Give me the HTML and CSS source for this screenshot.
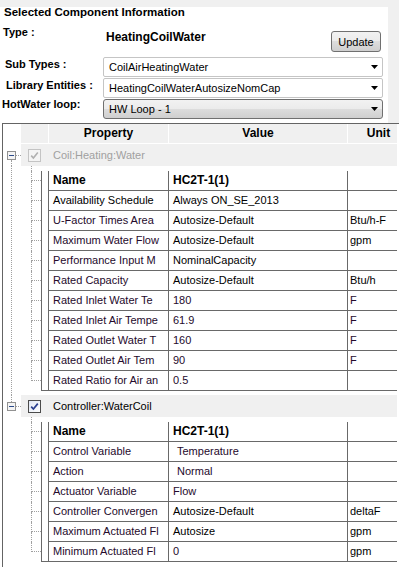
FILE: index.html
```html
<!DOCTYPE html>
<html lang="en">
<head>
    <meta charset="UTF-8">
    <title>Selected Component Information</title>
    <link rel="stylesheet" href="styles.css">
</head>
<body>
    <!-- Component form -->
    <div class="panel">
        <div class="title">Selected Component Information</div>

        <div class="type-row">
            <span class="label">Type :</span>
            <span class="type-value">HeatingCoilWater</span>
            <button class="btn">Update</button>
        </div>

        <div class="field">
            <span class="label lbl-sub">Sub Types :</span>
            <div class="combo">CoilAirHeatingWater<svg class="arrow" width="7" height="4"><path d="M0 0h7L3.5 4z" fill="#000"/></svg></div>
        </div>
        <div class="field">
            <span class="label lbl-lib">Library Entities :</span>
            <div class="combo">HeatingCoilWaterAutosizeNomCap<svg class="arrow" width="7" height="4"><path d="M0 0h7L3.5 4z" fill="#000"/></svg></div>
        </div>
        <div class="field">
            <span class="label lbl-loop">HotWater loop:</span>
            <div class="combo dark">HW Loop - 1<svg class="arrow" width="7" height="4"><path d="M0 0h7L3.5 4z" fill="#000"/></svg></div>
        </div>
    </div>

    <!-- Property grid -->
    <div class="grid">
        <div class="tree">
            <div class="header">
                <div class="c0"></div>
                <div class="c-prop">Property</div>
                <div class="c-val">Value</div>
                <div class="c-unit">Unit</div>
            </div>

            <!-- Coil:Heating:Water -->
            <div class="group">
                <div class="expander">
                    <div class="exp-col">
                        <div class="stem"></div>
                        <svg class="minus" width="9" height="9"><rect x="0.5" y="0.5" width="8" height="8" fill="#f4f4f4" stroke="#919191"/><path d="M2 4.5h5" stroke="#2b4a8a"/></svg>
                        <div class="stem on"></div>
                    </div>
                    <div class="branch"></div>
                </div>
                <div class="group-bar">
                    <svg class="check" width="13" height="13"><rect x="0.5" y="0.5" width="12" height="12" fill="#f4f4f4" stroke="#c4c4c4"/><path d="M3.2 6.6l2.2 2.4 4.4-5.4" fill="none" stroke="#b0b0b0" stroke-width="1.6"/></svg>
                    <span class="group-name off">Coil:Heating:Water</span>
                </div>
            </div>
            <div class="children">
                <div class="lead"></div>
                <div class="row bold"><div class="twig"><div class="twig-top"></div><div class="twig-bot"></div></div><div class="rh"></div><div class="cells"><div class="cell c-prop">Name</div><div class="cell c-val">HC2T-1(1)</div><div class="cell c-unit"></div></div></div>
                <div class="row"><div class="twig"><div class="twig-top"></div><div class="twig-bot"></div></div><div class="rh"></div><div class="cells"><div class="cell c-prop">Availability Schedule</div><div class="cell c-val">Always ON_SE_2013</div><div class="cell c-unit"></div></div></div>
                <div class="row"><div class="twig"><div class="twig-top"></div><div class="twig-bot"></div></div><div class="rh"></div><div class="cells"><div class="cell c-prop mod">U-Factor Times Area</div><div class="cell c-val">Autosize-Default</div><div class="cell c-unit">Btu/h-F</div></div></div>
                <div class="row"><div class="twig"><div class="twig-top"></div><div class="twig-bot"></div></div><div class="rh"></div><div class="cells"><div class="cell c-prop mod">Maximum Water Flow</div><div class="cell c-val">Autosize-Default</div><div class="cell c-unit">gpm</div></div></div>
                <div class="row"><div class="twig"><div class="twig-top"></div><div class="twig-bot"></div></div><div class="rh"></div><div class="cells"><div class="cell c-prop mod">Performance Input M</div><div class="cell c-val">NominalCapacity</div><div class="cell c-unit"></div></div></div>
                <div class="row"><div class="twig"><div class="twig-top"></div><div class="twig-bot"></div></div><div class="rh"></div><div class="cells"><div class="cell c-prop mod">Rated Capacity</div><div class="cell c-val">Autosize-Default</div><div class="cell c-unit">Btu/h</div></div></div>
                <div class="row"><div class="twig"><div class="twig-top"></div><div class="twig-bot"></div></div><div class="rh"></div><div class="cells"><div class="cell c-prop mod">Rated Inlet Water Te</div><div class="cell c-val mod">180</div><div class="cell c-unit mod">F</div></div></div>
                <div class="row"><div class="twig"><div class="twig-top"></div><div class="twig-bot"></div></div><div class="rh"></div><div class="cells"><div class="cell c-prop mod">Rated Inlet Air Tempe</div><div class="cell c-val mod">61.9</div><div class="cell c-unit mod">F</div></div></div>
                <div class="row"><div class="twig"><div class="twig-top"></div><div class="twig-bot"></div></div><div class="rh"></div><div class="cells"><div class="cell c-prop mod">Rated Outlet Water T</div><div class="cell c-val mod">160</div><div class="cell c-unit mod">F</div></div></div>
                <div class="row"><div class="twig"><div class="twig-top"></div><div class="twig-bot"></div></div><div class="rh"></div><div class="cells"><div class="cell c-prop mod">Rated Outlet Air Tem</div><div class="cell c-val mod">90</div><div class="cell c-unit mod">F</div></div></div>
                <div class="row last"><div class="twig"><div class="twig-top"></div><div class="twig-bot"></div></div><div class="rh"></div><div class="cells"><div class="cell c-prop mod">Rated Ratio for Air an</div><div class="cell c-val mod">0.5</div><div class="cell c-unit"></div></div></div>
            </div>

            <!-- Controller:WaterCoil -->
            <div class="group">
                <div class="expander">
                    <div class="exp-col">
                        <div class="stem on"></div>
                        <svg class="minus" width="9" height="9"><rect x="0.5" y="0.5" width="8" height="8" fill="#f4f4f4" stroke="#919191"/><path d="M2 4.5h5" stroke="#2b4a8a"/></svg>
                        <div class="stem"></div>
                    </div>
                    <div class="branch"></div>
                </div>
                <div class="group-bar">
                    <svg class="check" width="13" height="13"><defs><linearGradient id="cb" x1="0" y1="0" x2="1" y2="1"><stop offset="0" stop-color="#dfe6f4"/><stop offset="1" stop-color="#ffffff"/></linearGradient></defs><rect x="0.5" y="0.5" width="12" height="12" fill="url(#cb)" stroke="#4b4b4b"/><path d="M3.2 6.6l2.2 2.4 4.4-5.4" fill="none" stroke="#2a3f8f" stroke-width="1.7"/></svg>
                    <span class="group-name">Controller:WaterCoil</span>
                </div>
            </div>
            <div class="children last">
                <div class="lead"></div>
                <div class="row bold"><div class="twig"><div class="twig-top"></div><div class="twig-bot"></div></div><div class="rh"></div><div class="cells"><div class="cell c-prop">Name</div><div class="cell c-val">HC2T-1(1)</div><div class="cell c-unit"></div></div></div>
                <div class="row"><div class="twig"><div class="twig-top"></div><div class="twig-bot"></div></div><div class="rh"></div><div class="cells"><div class="cell c-prop mod">Control Variable</div><div class="cell c-val mod indent">Temperature</div><div class="cell c-unit"></div></div></div>
                <div class="row"><div class="twig"><div class="twig-top"></div><div class="twig-bot"></div></div><div class="rh"></div><div class="cells"><div class="cell c-prop mod">Action</div><div class="cell c-val mod indent">Normal</div><div class="cell c-unit"></div></div></div>
                <div class="row"><div class="twig"><div class="twig-top"></div><div class="twig-bot"></div></div><div class="rh"></div><div class="cells"><div class="cell c-prop mod">Actuator Variable</div><div class="cell c-val mod">Flow</div><div class="cell c-unit"></div></div></div>
                <div class="row"><div class="twig"><div class="twig-top"></div><div class="twig-bot"></div></div><div class="rh"></div><div class="cells"><div class="cell c-prop mod">Controller Convergen</div><div class="cell c-val">Autosize-Default</div><div class="cell c-unit">deltaF</div></div></div>
                <div class="row"><div class="twig"><div class="twig-top"></div><div class="twig-bot"></div></div><div class="rh"></div><div class="cells"><div class="cell c-prop mod">Maximum Actuated Fl</div><div class="cell c-val">Autosize</div><div class="cell c-unit">gpm</div></div></div>
                <div class="row last"><div class="twig"><div class="twig-top"></div><div class="twig-bot"></div></div><div class="rh"></div><div class="cells"><div class="cell c-prop mod">Minimum Actuated Fl</div><div class="cell c-val mod">0</div><div class="cell c-unit">gpm</div></div></div>
            </div>
        </div>
    </div>
</body>
</html>
```

FILE: styles.css
```css
/* General */
* {
    margin: 0;
    padding: 0;
    box-sizing: border-box;
}

body {
    font-family: "Liberation Sans", Arial, sans-serif;
    font-size: 11px;
    color: #000;
    background: #fff;
    width: 399px;
    height: 567px;
    overflow: hidden;
}

/* Top form */
.panel {
    width: 399px;
    height: 123px;
    border-right: 11px solid #f0f0f0;
    background: #fff;
}

.title {
    height: 22px;
    padding: 5px 0 0 4px;
    font-weight: bold;
    font-size: 11.5px;
    line-height: 14px;
    background: linear-gradient(#f0f0f0 7px, #fff 7px);
}

.type-row {
    display: flex;
    align-items: flex-start;
    height: 34px;
}

.label {
    flex: none;
    width: 103px;
    font-weight: bold;
    font-size: 11px;
    line-height: 14px;
}

.type-row .label {
    margin-top: 3px;
    padding-left: 3px;
}

.type-value {
    margin-top: 8px;
    padding-left: 3px;
    font-weight: bold;
    font-size: 12px;
    line-height: 14px;
}

.btn {
    margin: 9px 7px 0 auto;
    width: 50px;
    height: 21px;
    border: 1px solid #707070;
    border-radius: 3px;
    background: linear-gradient(#f2f2f2, #ebebeb 50%, #dddddd 50%, #cfcfcf);
    font-family: inherit;
    font-size: 11px;
    color: #000;
}

.field {
    display: flex;
    align-items: flex-start;
    height: 21px;
}

.lbl-sub {
    margin-top: 1px;
    padding-left: 5px;
}

.lbl-lib {
    margin-top: 1px;
    padding-left: 6px;
}

.lbl-loop {
    margin-top: -1px;
    padding-left: 2px;
}

.combo {
    margin-top: 1px;
    width: 280px;
    height: 20px;
    padding: 0 4px 0 5px;
    border: 1px solid #c5c5c5;
    border-radius: 2px;
    background: #fff;
    display: flex;
    align-items: center;
    justify-content: space-between;
    font-size: 11px;
}

.combo.dark {
    border-color: #707070;
    border-radius: 3px;
    background: linear-gradient(#f2f2f2, #ebebeb 50%, #dddddd 50%, #cfcfcf);
}

/* Property grid */
.grid {
    margin-left: 2px;
    height: 444px;
    border-left: 1px solid #646464;
    border-top: 1px solid #646464;
    background: #fff;
}

.tree {
    width: 394px;
}

.header {
    display: flex;
    margin-left: 18px;
    height: 20px;
    background: #f0f0f0;
    border-bottom: 1px solid #fff;
    font-weight: bold;
    font-size: 12px;
    line-height: 19px;
    text-align: center;
}

.header .c0 {
    width: 28px;
    border-right: 1px solid #fff;
}

.header .c-prop,
.header .c-val {
    border-right: 1px solid #fff;
}

.header .c-unit {
    padding-left: 12px;
}

.c-prop {
    flex: none;
    width: 120px;
}

.c-val {
    flex: none;
    width: 179px;
}

.c-unit {
    flex: 1;
}

/* Group rows */
.group {
    display: flex;
    height: 22px;
}

.expander {
    display: flex;
    width: 18px;
    padding-left: 4px;
}

.exp-col {
    display: flex;
    flex-direction: column;
    width: 9px;
}

.stem {
    flex: 1;
    margin-left: 4px;
}

.stem.on {
    border-left: 1px dotted #a0a0a0;
}

.minus {
    flex: none;
    display: block;
}

.branch {
    align-self: center;
    width: 5px;
    border-top: 1px dotted #a0a0a0;
}

.group-bar {
    flex: 1;
    display: flex;
    align-items: center;
    background: #f0f0f0;
}

.check {
    margin-left: 7px;
    display: block;
}

.group-name {
    margin-left: 12px;
    font-size: 11px;
}

.group-name.off {
    color: #a0a0a0;
}

/* Child rows */
.children {
    margin-left: 8px;
    padding-bottom: 4px;
    border-left: 1px dotted #a0a0a0;
}

.children.last {
    border-left-color: transparent;
    padding-bottom: 0;
}

.lead {
    height: 5px;
    margin-left: 19px;
    border-left: 1px dotted #a0a0a0;
}

.row {
    display: flex;
    height: 20px;
}

.twig {
    flex: none;
    width: 29px;
    padding-left: 19px;
    display: flex;
    flex-direction: column;
}

.twig-top {
    height: 10px;
    border-left: 1px dotted #a0a0a0;
    border-bottom: 1px dotted #a0a0a0;
}

.twig-bot {
    flex: 1;
    border-left: 1px dotted #a0a0a0;
}

.row.last .twig-bot {
    border-left: none;
}

.rh {
    flex: none;
    width: 8px;
    border-left: 1px solid #696969;
    border-right: 1px solid #696969;
}

.row.last .rh {
    border-bottom: 1px solid #696969;
}

.cells {
    flex: 1;
    display: flex;
    border-bottom: 1px solid #696969;
}

.cell {
    padding-left: 4px;
    line-height: 19px;
    white-space: nowrap;
    overflow: hidden;
}

.cells .c-prop,
.cells .c-val {
    border-right: 1px solid #696969;
}

.cells .c-unit {
    padding-left: 2px;
}

.row.bold .cell {
    font-weight: bold;
    font-size: 12px;
}

.mod {
    color: #250a2c;
}

.indent {
    padding-left: 8px;
}
```
